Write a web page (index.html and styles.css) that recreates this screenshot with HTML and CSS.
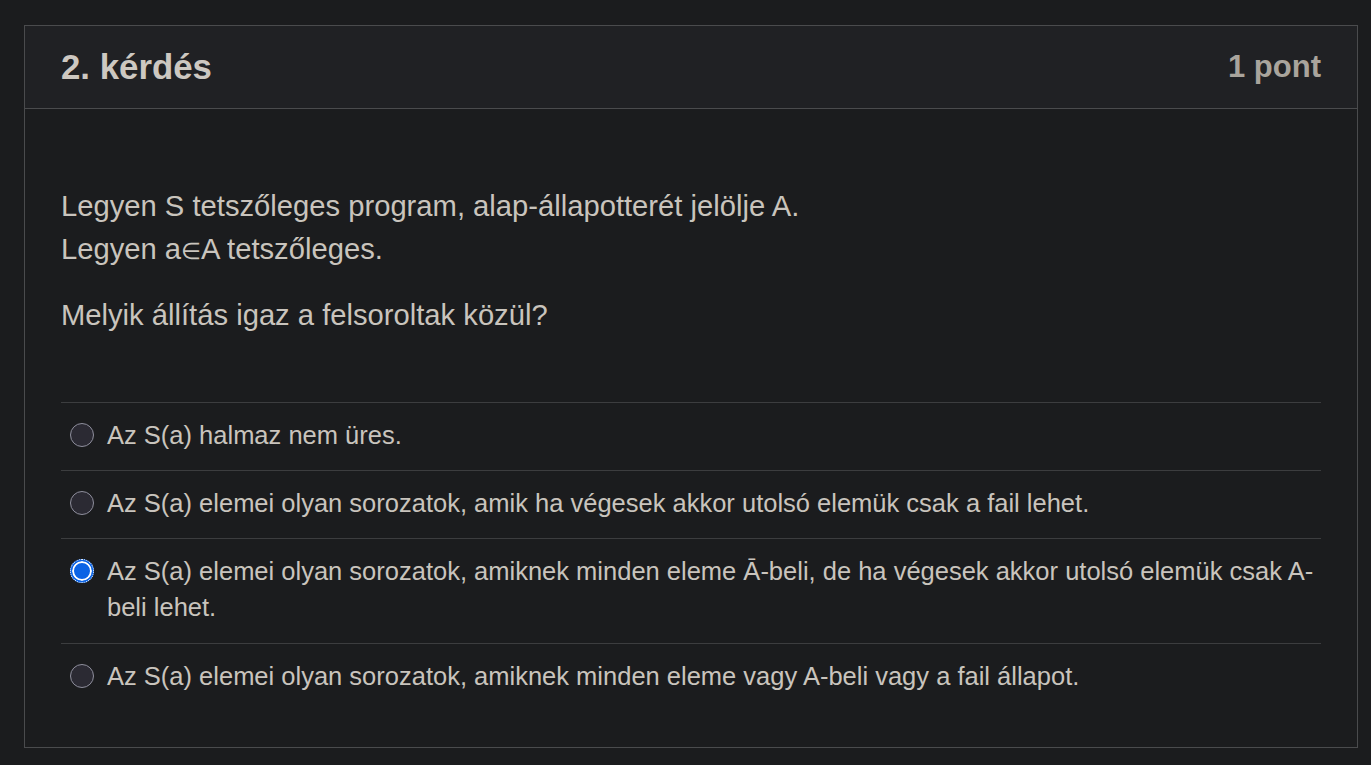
FILE: index.html
```html
<!DOCTYPE html>
<html lang="hu">
<head>
<meta charset="utf-8">
<title>2. kérdés</title>
<link rel="stylesheet" href="styles.css">
</head>
<body>
<div class="page">
  <section class="card">
    <header class="card-head">
      <h2 class="title">2. kérdés</h2>
      <span class="points">1 pont</span>
    </header>
    <div class="card-body">
      <div class="question">
        <p>Legyen S tetszőleges program, alap-állapotterét jelölje A.<br>Legyen a<span class="sym">∈</span>A tetszőleges.</p>
        <p>Melyik állítás igaz a felsoroltak közül?</p>
      </div>
      <ul class="options">
        <li class="option"><span class="radio"></span><span class="label">Az S(a) halmaz nem üres.</span></li>
        <li class="option"><span class="radio"></span><span class="label">Az S(a) elemei olyan sorozatok, amik ha végesek akkor utolsó elemük csak a fail lehet.</span></li>
        <li class="option"><span class="radio checked"></span><span class="label">Az S(a) elemei olyan sorozatok, amiknek minden eleme Ā-beli, de ha végesek akkor utolsó elemük csak A-beli lehet.</span></li>
        <li class="option"><span class="radio"></span><span class="label">Az S(a) elemei olyan sorozatok, amiknek minden eleme vagy A-beli vagy a fail állapot.</span></li>
      </ul>
    </div>
  </section>
</div>
</body>
</html>
```
FILE: styles.css
```css
html, body {
  margin: 0;
  padding: 0;
  background: #1b1c1e;
}
body {
  font-family: "Liberation Sans", Arial, sans-serif;
  color: #c9c4bd;
}
.page {
  padding: 25px 13px 15px 24px;
}
.card {
  border: 1px solid #4a4b4d;
  background: #1b1c1e;
}
.card-head {
  height: 82px;
  display: flex;
  align-items: center;
  justify-content: space-between;
  padding: 0 36px 0 36px;
  background: #202124;
  border-bottom: 1px solid #4a4b4d;
}
.title {
  margin: 0;
  font-size: 34.8px;
  font-weight: bold;
  color: #cdc8c1;
}
.points {
  font-size: 31px;
  font-weight: bold;
  color: #a9a49c;
}
.card-body {
  padding: 76px 36px 36px 36px;
}
.question {
  font-size: 29.2px;
  line-height: 43.2px;
}
.question p {
  margin: 0 0 23px 0;
}
.question p:last-child {
  margin-bottom: 64px;
}
.sym {
  font-size: 0.8em;
  line-height: 0;
}
.options {
  list-style: none;
  margin: 0;
  padding: 0;
}
.option {
  display: flex;
  align-items: flex-start;
  border-top: 1px solid #3c3d3f;
  padding: 14px 0 17px 0;
  font-size: 25.5px;
  line-height: 36px;
}
.option:nth-child(3) {
  padding-bottom: 18px;
}
.radio {
  flex: none;
  box-sizing: border-box;
  width: 24px;
  height: 24px;
  margin: 6px 13px 0 9px;
  border-radius: 50%;
  border: 1px solid #8f8f9d;
  background: #2b2a33;
}
.radio.checked {
  border: 2px solid #0b63e5;
  background: #0b63e5;
  box-shadow: inset 0 0 0 2px #ffffff;
  outline: 1px dotted #ffffff;
  outline-offset: -1px;
}
.label {
  flex: 1;
}
```
